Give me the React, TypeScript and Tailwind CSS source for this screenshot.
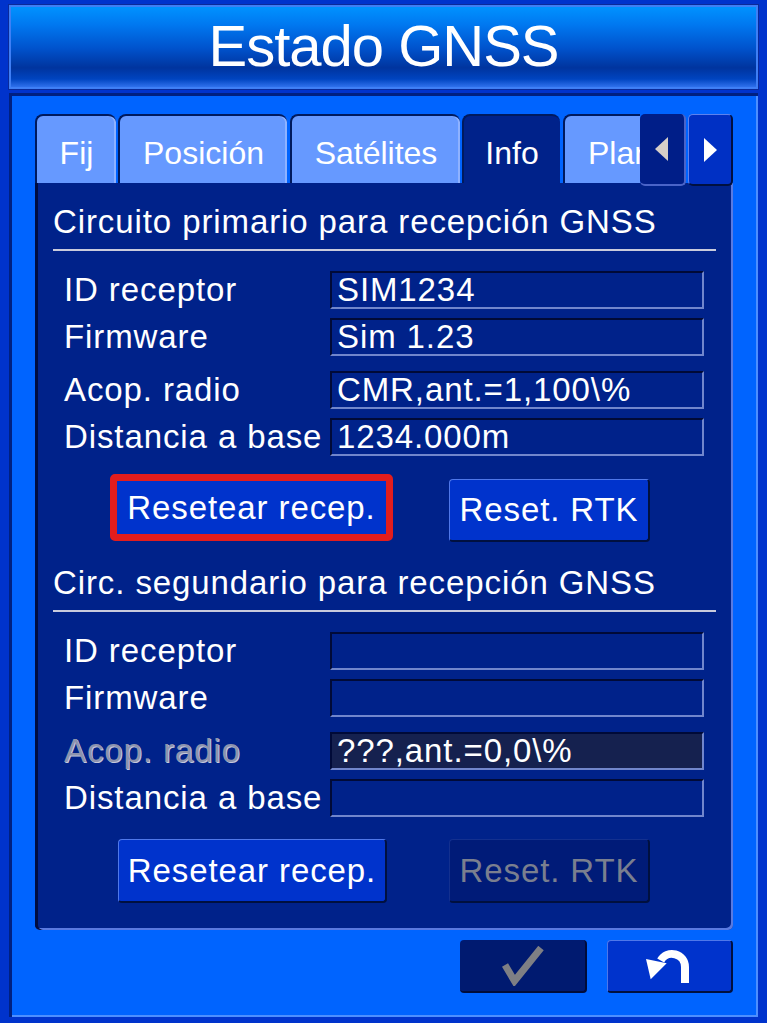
const font = "font-['Liberation_Sans',Arial,sans-serif]";

type Row = { label: string; value?: string; dim?: boolean; dark?: boolean; gap: string };

const primary: Row[] = [
  { label: 'ID receptor', value: 'SIM1234', gap: 'mt-0' },
  { label: 'Firmware', value: 'Sim 1.23', gap: 'mt-[9px]' },
  { label: 'Acop. radio', value: 'CMR,ant.=1,100\\%', gap: 'mt-[15px]' },
  { label: 'Distancia a base', value: '1234.000m', gap: 'mt-[9px]' },
];

const secondary: Row[] = [
  { label: 'ID receptor', gap: 'mt-0' },
  { label: 'Firmware', gap: 'mt-[9px]' },
  { label: 'Acop. radio', value: '???,ant.=0,0\\%', dim: true, dark: true, gap: 'mt-[15px]' },
  { label: 'Distancia a base', gap: 'mt-[9px]' },
];

const Field = ({ row }: { row: Row }) => (
  <div className={`flex items-center h-[38px] ${row.gap}`}>
    <div
      className={`w-[266px] ${
        row.dim ? 'text-[#8d93ae] [text-shadow:1px_1px_0_#c4c8dc]' : 'text-white'
      }`}
    >
      {row.label}
    </div>
    <div
      className={`w-[374px] h-[38px] flex items-center pl-[5px] border-2 border-t-[#000a38] border-l-[#000a38] border-b-[#7186cc] border-r-[#7186cc] ${
        row.dark ? 'bg-[#15214f]' : 'bg-[#00228a]'
      }`}
    >
      {row.value}
    </div>
  </div>
);

const Heading = ({ text }: { text: string }) => (
  <>
    <div className="leading-[38px]">{text}</div>
    <div className="mt-[8px] h-[2px] bg-[#c9cbdc]" />
  </>
);

const btn =
  'flex items-center justify-center rounded-[4px] border-t border-l border-t-[#4f78ea] border-l-[#4f78ea] border-b-2 border-r-2 border-b-[#00103f] border-r-[#00103f]';

const tabBase =
  'h-full shrink-0 flex items-center justify-center pt-[6px] rounded-t-[8px] border-t-2 border-l-2 border-t-[#001a5e] border-l-[#001a5e] text-[32px] tracking-normal';

export default function App() {
  return (
    <div
      className={`w-[767px] h-[1023px] bg-[#0033cc] pt-[5px] px-[9px] flex flex-col text-white text-[33px] tracking-[0.9px] ${font}`}
    >
      <header className="h-[84px] shrink-0 flex items-center justify-center pb-[2px] border-2 border-[#3f7ff5] outline outline-[#0a2a9a] bg-[linear-gradient(to_bottom,#0092ff_0%,#0078f0_22%,#0052cc_52%,#00349e_76%,#0044c0_90%,#2f70ec_100%)]">
        <h1 className="text-[58px] tracking-[-1px] leading-none">Estado GNSS</h1>
      </header>

      <div className="mt-[4px] h-[924px] shrink-0 bg-[#0064ff] pt-[21px] pl-[26px] pr-[25px] flex flex-col shadow-[inset_3px_3px_0_#002080,inset_-2px_-2px_0_#4d8fff]">
        <div className="h-[69px] shrink-0 flex">
          <div className="w-[605px] h-full overflow-hidden flex">
            <div className={`${tabBase} w-[81px] bg-[#6699ff] shadow-[inset_-2px_0_0_#8fb2ff]`}>Fij</div>
            <div className={`${tabBase} ml-[2px] w-[169px] bg-[#6699ff] shadow-[inset_-2px_0_0_#8fb2ff]`}>Posición</div>
            <div className={`${tabBase} ml-[3px] w-[170px] bg-[#6699ff] shadow-[inset_-2px_0_0_#8fb2ff]`}>Satélites</div>
            <div className={`${tabBase} ml-[2px] w-[98px] bg-[#00228a] border-t-[#000a38] border-l-[#000a38]`}>Info</div>
            <div className={`${tabBase} ml-[3px] w-[132px] bg-[#6699ff] justify-start pl-[23px]`}>Plano</div>
          </div>
          <div className="relative z-10 h-[72px] flex">
            <div className="w-[46px] h-full flex items-center justify-center rounded-[5px] bg-[#001e88] border-b-2 border-r-2 border-[#4a64c8]">
              <svg width="14" height="24" viewBox="0 0 14 24">
                <polygon points="13,0 13,24 0,12" fill="#d6cfc8" />
              </svg>
            </div>
            <div className="ml-[2px] w-[45px] h-full flex items-center justify-center rounded-[5px] bg-[#0030c4] border-t border-l border-[#5d82ee] border-b-2 border-r-2 border-b-[#00103f] border-r-[#00103f]">
              <svg width="14" height="24" viewBox="0 0 14 24">
                <polygon points="1,0 1,24 14,12" fill="#ffffff" />
              </svg>
            </div>
          </div>
        </div>

        <div className="h-[747px] shrink-0 bg-[#00228a] pt-[20px] pl-[18px] pr-[17px] rounded-b-[5px] shadow-[inset_3px_0_0_#000c40,inset_-2px_-2px_0_#5a7ae0]">
          <Heading text="Circuito primario para recepción GNSS" />
          <div className="mt-[20px] pl-[11px]">
            {primary.map((r) => (
              <Field key={r.label} row={r} />
            ))}
          </div>
          <div className="mt-[18px] ml-[57px] flex items-start">
            <div className="w-[283px] h-[67px] rounded-[5px] border-[7px] border-[#e21d1d] bg-[#0033cc] flex items-center justify-center">
              Resetear recep.
            </div>
            <div className={`${btn} ml-[56px] mt-[5px] w-[201px] h-[63px] bg-[#0033cc]`}>Reset. RTK</div>
          </div>

          <div className="mt-[22px]">
            <Heading text="Circ. segundario para recepción GNSS" />
          </div>
          <div className="mt-[20px] pl-[11px]">
            {secondary.map((r) => (
              <Field key={r.label} row={r} />
            ))}
          </div>
          <div className="mt-[22px] ml-[65px] flex">
            <div className={`${btn} w-[269px] h-[64px] bg-[#0033cc]`}>Resetear recep.</div>
            <div className={`${btn} ml-[62px] w-[201px] h-[64px] bg-[#001b78] text-[#7a7f8f] border-t-[#13308f] border-l-[#13308f]`}>
              Reset. RTK
            </div>
          </div>
        </div>

        <div className="mt-[10px] flex justify-end gap-[20px]">
          <div className="w-[127px] h-[53px] rounded-[4px] bg-[#001a70] border-b-2 border-r-2 border-[#000c3a] flex items-center justify-center">
            <svg width="44" height="40" viewBox="0 0 44 40">
              <polyline points="4,19 13.5,35 40,2" fill="none" stroke="#7e7f84" strokeWidth="7" strokeLinejoin="miter" />
            </svg>
          </div>
          <div className={`${btn} w-[126px] h-[53px] bg-[#0033cc]`}>
            <svg width="52" height="40" viewBox="0 0 52 40">
              <path d="M41 37 V21 A13 13 0 0 0 16.7 14.5" fill="none" stroke="#ffffff" strokeWidth="8" />
              <polygon points="2,13 6.7,33.3 22.7,17.3" fill="#ffffff" />
            </svg>
          </div>
        </div>
      </div>
    </div>
  );
}
